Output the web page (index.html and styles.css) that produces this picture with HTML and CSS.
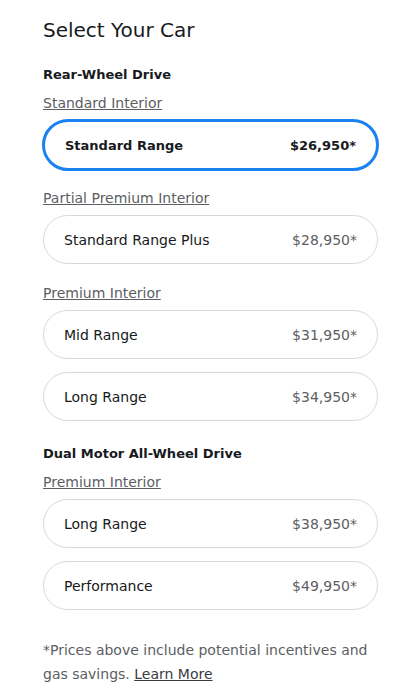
FILE: index.html
```html
<!DOCTYPE html>
<html>
<head>
<meta charset="utf-8">
<link rel="stylesheet" href="styles.css">
</head>
<body>
<div class="page">
  <h1 class="title">Select Your Car</h1>

  <h2 class="drive first">Rear-Wheel Drive</h2>
  <a class="interior">Standard Interior</a>
  <div class="cards tight">
    <div class="card selected"><span>Standard Range</span><span>$26,950*</span></div>
  </div>

  <a class="interior">Partial Premium Interior</a>
  <div class="cards loose">
    <div class="card"><span>Standard Range Plus</span><span class="price">$28,950*</span></div>
  </div>

  <a class="interior">Premium Interior</a>
  <div class="cards">
    <div class="card"><span>Mid Range</span><span class="price">$31,950*</span></div>
    <div class="card"><span>Long Range</span><span class="price">$34,950*</span></div>
  </div>

  <h2 class="drive">Dual Motor All-Wheel Drive</h2>
  <a class="interior">Premium Interior</a>
  <div class="cards">
    <div class="card"><span>Long Range</span><span class="price">$38,950*</span></div>
    <div class="card"><span>Performance</span><span class="price">$49,950*</span></div>
  </div>

  <p class="note">*Prices above include potential incentives and gas savings. <a class="learn">Learn More</a></p>
</div>
</body>
</html>
```

FILE: styles.css
```css
html, body {
  margin: 0;
  padding: 0;
  background: #ffffff;
}
body {
  font-family: "DejaVu Sans", "Noto Sans", sans-serif;
  color: #171a20;
}
.page {
  padding: 16px 41px 0 43px;
  display: flex;
  flex-direction: column;
}
.title {
  margin: 0;
  font-size: 20px;
  font-weight: 400;
  line-height: 28px;
  color: #171a20;
}
.drive {
  margin: 15px 0 0 0;
  font-size: 13px;
  font-weight: 700;
  line-height: 18px;
}
.drive.first {
  margin-top: 22px;
}
.interior {
  margin-top: 10px;
  font-size: 14px;
  line-height: 18px;
  color: #5c5e62;
  text-decoration: underline;
  align-self: flex-start;
}
.cards {
  margin-top: 8px;
  margin-bottom: 9px;
  display: flex;
  flex-direction: column;
  gap: 13px;
}
.cards.tight {
  margin-top: 7px;
  margin-bottom: 8px;
}
.cards.loose {
  margin-bottom: 10px;
}
.card {
  height: 49px;
  box-sizing: border-box;
  border: 1px solid #d9d9d9;
  border-radius: 25px;
  padding: 0 20px;
  display: flex;
  justify-content: space-between;
  align-items: center;
  font-size: 14px;
  color: #171a20;
}
.card.selected {
  height: 52px;
  border: 3px solid #1a82f0;
  border-radius: 27px;
  margin-left: -1px;
  margin-right: -1px;
  font-size: 13px;
  font-weight: 700;
}
.price {
  color: #5c5e62;
}
.note {
  margin: 19px 0 0 0;
  font-size: 14px;
  line-height: 24px;
  color: #5c5e62;
}
.learn {
  color: #393c41;
  text-decoration: underline;
}
```
